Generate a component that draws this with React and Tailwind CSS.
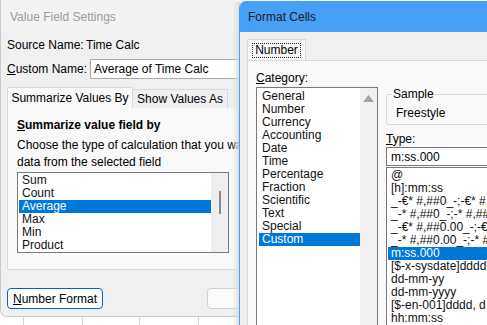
const font = "font-['Liberation_Sans',Arial,sans-serif]";

// Simple listbox row
const Row = ({ text, selected }) => (
  <div
    className={`shrink-0 h-[13px] leading-[13px] whitespace-nowrap pl-[3px] ${
      selected ? "bg-[#0078d7] text-white" : "text-[#111]"
    }`}
  >
    {text}
  </div>
);

const summarize = ["Sum", "Count", "Average", "Max", "Min", "Product"];

const categories = [
  "General",
  "Number",
  "Currency",
  "Accounting",
  "Date",
  "Time",
  "Percentage",
  "Fraction",
  "Scientific",
  "Text",
  "Special",
  "Custom",
];

const types = [
  "@",
  "[h]:mm:ss",
  "_-€* #,##0_-;-€* #,##0_-;_-€* \"-\"_-;_-@_-",
  "_-* #,##0_-;-* #,##0_-;_-* \"-\"_-;_-@_-",
  "_-€* #,##0.00_-;-€* #,##0.00_-",
  "_-* #,##0.00_-;-* #,##0.00_-",
  "m:ss.000",
  "[$-x-sysdate]dddd, mmmm dd",
  "dd-mm-yy",
  "dd-mm-yyyy",
  "[$-en-001]dddd, d mmmm",
  "hh:mm:ss",
];

export default function App() {
  return (
    <div className={`relative w-[487px] h-[325px] overflow-hidden bg-white text-[12px] ${font}`}>
      {/* spreadsheet grid behind the dialogs */}
      <div className="absolute left-0 bottom-0 flex h-[12px] w-full">
        <div className="w-[24px] border-r border-[#d6d6d6]" />
        <div className="w-[59px] border-r border-[#d6d6d6]" />
        <div className="w-[57px] border-r border-[#d6d6d6]" />
        <div className="w-[59px] border-r border-[#d6d6d6]" />
        <div className="w-[59px] border-r border-[#d6d6d6]" />
      </div>

      {/* Value Field Settings window */}
      <div className="absolute left-0 top-0 w-[300px] h-[317px] bg-[#f0f0f0] border-l border-b border-[#c9c9c9] rounded-bl-[7px] flex flex-col">
        <div className="shrink-0 h-[33px] bg-[#f3f3f3] flex items-center pl-[9px] text-[#9b9b9b]">
          Value Field Settings
        </div>
        <div className="px-[6px] flex flex-col">
          <div className="shrink-0 mt-[4px] h-[16px] flex items-center">
            <span className="shrink-0 w-[79px]">Source Name:</span>
            <span>Time Calc</span>
          </div>
          <div className="shrink-0 mt-[6px] h-[20px] flex items-center">
            <span className="shrink-0 w-[83px]">
              <u>C</u>ustom Name:
            </span>
            <div className="h-[20px] flex-1 bg-white border border-[#a8a8a8] flex items-center pl-[3px]">
              Average of Time Calc
            </div>
          </div>
          <div className="shrink-0 mt-[8px] flex items-end h-[21px]">
            <div className="h-[21px] w-[126px] bg-[#f9f9f9] border border-b-0 border-[#d9d9d9] flex items-center justify-center">
              Summarize Values By
            </div>
            <div className="h-[19px] w-[95px] border border-l-0 border-b-0 border-[#d9d9d9] flex items-center justify-center">
              Show Values As
            </div>
          </div>
          <div className="shrink-0 h-[162px] w-[232px] bg-[#f9f9f9] border border-t-0 border-[#d9d9d9] px-[9px] pt-[9px] flex flex-col">
            <div className="font-bold h-[16px] leading-[16px]">
              <u>S</u>ummarize value field by
            </div>
            <div className="mt-[4px] leading-[17px] whitespace-nowrap">
              Choose the type of calculation that you want to use to summarize
              <br />
              data from the selected field
            </div>
            <div className="shrink-0 mt-[1px] w-[212px] h-[81px] bg-white border border-[#7a7a7a] flex">
              <div className="flex-1 pt-[1px] pl-[1px] flex flex-col">
                {summarize.map((s) => (
                  <Row key={s} text={s} selected={s === "Average"} />
                ))}
              </div>
              <div className="w-[17px] bg-[#eeeeee] flex justify-center">
                <div className="mt-[18px] w-[2px] h-[23px] bg-[#8a8a8a]" />
              </div>
            </div>
          </div>
          <div className="shrink-0 mt-[18px] flex">
            <div className="shrink-0 w-[96px] h-[21px] bg-white border border-[#0067c0] rounded-[4px] flex items-center justify-center">
              <u>N</u>umber Format
            </div>
            <div className="shrink-0 ml-[104px] w-[80px] h-[21px] bg-[#fbfbfb] border border-[#d0d0d0] rounded-[4px] flex items-center justify-center">
              OK
            </div>
          </div>
        </div>
      </div>

      {/* shadow of the top window */}
      <div className="absolute left-[232px] top-[2px] w-[8px] h-[323px] bg-gradient-to-r from-transparent to-[#dcdcdc]" />

      {/* Format Cells window */}
      <div className="absolute left-[239px] top-[1px] w-[260px] h-[340px] bg-[#f0f0f0] border-l border-[#4a9ff5] rounded-tl-[7px] overflow-hidden flex flex-col">
        <div className="shrink-0 h-[31px] bg-[#46a0f5] flex items-center pl-[8px] text-[#1b1b1b]">
          Format Cells
        </div>
        <div className="shrink-0 pl-[7px] pt-[7px] flex flex-col">
          <div className="shrink-0 w-[59px] h-[21px] bg-[#f9f9f9] border border-b-0 border-[#d9d9d9] flex items-center justify-center">
            <span className="border border-dotted border-[#222] px-[2px] leading-[13px]">
              Number
            </span>
          </div>
          <div className="shrink-0 h-[300px] bg-[#f9f9f9] border border-[#d9d9d9] pl-[8px] pt-[9px] flex gap-[8px]">
            <div className="shrink-0 flex flex-col">
              <div className="shrink-0 h-[16px] leading-[16px]">
                <u>C</u>ategory:
              </div>
              <div className="shrink-0 mt-[1px] w-[122px] h-[260px] bg-white border border-[#7a7a7a] flex">
                <div className="flex-1 pt-[2px] pl-[2px] flex flex-col">
                  {categories.map((c) => (
                    <Row key={c} text={c} selected={c === "Custom"} />
                  ))}
                </div>
                <div className="w-[17px] bg-[#f0f0f0] flex justify-center">
                  <svg width="11" height="7" viewBox="0 0 11 7" className="mt-[7px]">
                    <polygon points="0,7 5.5,0 11,7" fill="#a3a3a3" />
                  </svg>
                </div>
              </div>
            </div>
            <div className="flex flex-col flex-1 min-w-0">
              <div className="shrink-0 relative mt-[24px] h-[31px] border border-[#d9d9d9] rounded-[2px] pl-[9px] pt-[11px] leading-[14px]">
                <span className="absolute -top-[8px] left-[5px] bg-[#f9f9f9] px-[1px] leading-[14px]">
                  Sample
                </span>
                Freestyle
              </div>
              <div className="shrink-0 mt-[6px] h-[16px] leading-[16px]">
                <u>T</u>ype:
              </div>
              <div className="shrink-0 h-[19px] bg-white border border-[#7a7a7a] flex items-center pl-[4px]">
                m:ss.000
              </div>
              <div className="shrink-0 mt-[1px] h-[200px] bg-white border border-[#7a7a7a] pt-[1px] pl-[1px] flex flex-col overflow-hidden">
                {types.map((t) => (
                  <Row key={t} text={t} selected={t === "m:ss.000"} />
                ))}
              </div>
            </div>
          </div>
        </div>
      </div>
    </div>
  );
}
